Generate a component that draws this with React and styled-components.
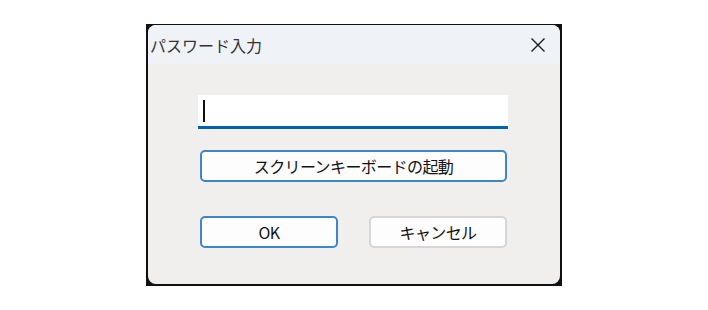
import styled, { createGlobalStyle } from 'styled-components'

const GlobalStyle = createGlobalStyle`
  body {
    margin: 0;
    background: #ffffff;
    font-family: "Noto Sans CJK JP", "Noto Sans", sans-serif;
  }
`;

const App = () => {
  return (
    <Page>
      <GlobalStyle />
      <Frame>
        <Window>
          <TitleBar>
            <Title>パスワード入力</Title>
            <CloseButton aria-label="閉じる">
              <svg width="16" height="16" viewBox="0 0 16 16">
                <path d="M1.5 1.5 L14.5 14.5 M14.5 1.5 L1.5 14.5" stroke="#1c1c1c" strokeWidth="1.4" fill="none" />
              </svg>
            </CloseButton>
          </TitleBar>
          <Body>
            <Input>
              <Caret />
            </Input>
            <Button $primary $wide>スクリーンキーボードの起動</Button>
            <ButtonRow>
              <Button $primary>OK</Button>
              <Button>キャンセル</Button>
            </ButtonRow>
          </Body>
        </Window>
      </Frame>
    </Page>
  );
}

export default App

const Page = styled.div`
  width: 708px;
  height: 310px;
  padding: 24px 0 0 146px;
  box-sizing: border-box;
`;

const Frame = styled.div`
  width: 416px;
  height: 262px;
  box-sizing: border-box;
  background: #111111;
  padding: 1px 2px 2px 2px;
  display: flex;
`;

const Window = styled.div`
  flex: 1;
  display: flex;
  flex-direction: column;
  border-radius: 8px;
  overflow: hidden;
  background: #f0efee;
`;

const TitleBar = styled.div`
  height: 39px;
  background: #eff2f7;
  display: flex;
  align-items: center;
  justify-content: space-between;
  padding: 0 14px 0 2px;
`;

const Title = styled.span`
  font-size: 16px;
  color: #333333;
  letter-spacing: 0;
`;

const CloseButton = styled.div`
  width: 16px;
  height: 16px;
  display: flex;
`;

const Body = styled.div`
  flex: 1;
  display: flex;
  flex-direction: column;
  padding: 31px 0 0 50px;
`;

const Input = styled.div`
  width: 305px;
  height: 31px;
  background: #ffffff;
  border-bottom: 3px solid #0063b1;
  display: flex;
  align-items: center;
  padding-left: 5px;
  box-sizing: content-box;
`;

const Caret = styled.span`
  width: 1.5px;
  height: 22px;
  background: #111111;
`;

const Button = styled.button`
  width: ${(p) => (p.$wide ? '307px' : '138px')};
  height: 32px;
  margin-top: ${(p) => (p.$wide ? '21px' : '0')};
  margin-left: ${(p) => (p.$wide ? '2px' : '0')};
  padding: 0;
  border-radius: 5px;
  border: 2px solid ${(p) => (p.$primary ? '#3f85c9' : '#d6d6d6')};
  background: #fdfdfd;
  font-family: "Noto Sans CJK JP", "Noto Sans", sans-serif;
  font-size: 16px;
  color: #111111;
  letter-spacing: -0.6px;
  box-sizing: border-box;
`;

const ButtonRow = styled.div`
  display: flex;
  gap: 31px;
  margin-top: 34px;
  margin-left: 2px;
`;
